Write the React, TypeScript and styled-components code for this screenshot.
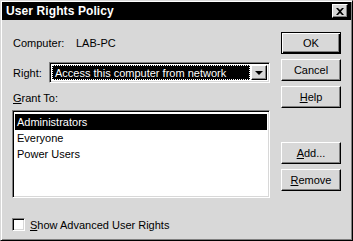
import styled, { createGlobalStyle } from "styled-components";

const GlobalStyle = createGlobalStyle`
  html, body {
    margin: 0;
    padding: 0;
    background: #ffffff;
  }
  body {
    font-family: "Liberation Sans", Arial, sans-serif;
    font-size: 11px;
    color: #000;
  }
`;

const face = "#d8d8d8";
const shadow = "#808080";

const Window = styled.div`
  width: 353px;
  height: 241px;
  box-sizing: border-box;
  background: ${face};
  border: 1px solid;
  border-color: ${face} #000 #000 ${face};
  box-shadow: inset 1px 1px 0 #fff, inset -1px -1px 0 ${shadow};
  padding: 1px;
  display: flex;
  flex-direction: column;
`;

const TitleBar = styled.div`
  height: 18px;
  background: #000;
  display: flex;
  align-items: center;
  justify-content: space-between;
  padding: 0 3px 0 4px;
`;

const Title = styled.span`
  color: #fff;
  font-weight: bold;
  font-size: 12px;
  letter-spacing: 0.1px;
`;

const raised = `
  border: 1px solid;
  border-color: #fff #000 #000 #fff;
  box-shadow: inset -1px -1px 0 ${shadow};
`;

const CloseButton = styled.button`
  width: 16px;
  height: 14px;
  padding: 0;
  box-sizing: border-box;
  background: ${face};
  ${raised}
  display: flex;
  align-items: center;
  justify-content: center;
`;

const Content = styled.div`
  display: flex;
  gap: 11px;
  padding: 12px 10px 0 10px;
`;

const LeftCol = styled.div`
  width: 258px;
  display: flex;
  flex-direction: column;
`;

const RightCol = styled.div`
  width: 60px;
  display: flex;
  flex-direction: column;
  gap: 5px;
`;

const InfoRow = styled.div`
  height: 21px;
  display: flex;
  align-items: center;
  padding-left: 1px;
`;

const Label = styled.span<{ $w?: number }>`
  display: inline-block;
  width: ${(p) => (p.$w ? `${p.$w}px` : "auto")};
  white-space: nowrap;
`;

const ComboRow = styled.div`
  margin-top: 9px;
  height: 21px;
  display: flex;
  align-items: center;
  padding-left: 1px;
`;

const sunken = `
  border: 1px solid;
  border-color: ${shadow} #fff #fff ${shadow};
  box-shadow: inset 1px 1px 0 #000, inset -1px -1px 0 ${face};
`;

const Combo = styled.div`
  width: 221px;
  height: 21px;
  box-sizing: border-box;
  background: #fff;
  ${sunken}
  padding: 2px;
  display: flex;
  gap: 1px;
`;

const ComboValue = styled.div`
  flex: 1;
  background: #000;
  color: #fff;
  outline: 1px dotted #fff;
  outline-offset: -1px;
  display: flex;
  align-items: center;
  padding-left: 3px;
  white-space: nowrap;
`;

const ArrowButton = styled.div`
  width: 16px;
  box-sizing: border-box;
  background: ${face};
  ${raised}
  display: flex;
  align-items: center;
  justify-content: center;
`;

const Arrow = styled.div`
  width: 0;
  height: 0;
  border-left: 4px solid transparent;
  border-right: 4px solid transparent;
  border-top: 4px solid #000;
`;

const GrantLabel = styled.div`
  margin-top: 8px;
  height: 14px;
  line-height: 14px;
  padding-left: 1px;
`;

const ListBox = styled.div`
  margin-top: 5px;
  height: 88px;
  box-sizing: border-box;
  background: #fff;
  ${sunken}
  padding: 3px 2px 2px;
`;

const ListItem = styled.div<{ $selected?: boolean }>`
  height: 16px;
  line-height: 16px;
  padding-left: 2px;
  background: ${(p) => (p.$selected ? "#000" : "transparent")};
  color: ${(p) => (p.$selected ? "#fff" : "#000")};
`;

const Button = styled.button<{ $default?: boolean; $spaced?: boolean }>`
  width: 60px;
  height: 22px;
  box-sizing: border-box;
  padding: 0;
  margin-top: ${(p) => (p.$spaced ? "29px" : "0")};
  background: ${face};
  font-family: inherit;
  font-size: 11px;
  color: #000;
  border: 1px solid;
  border-color: ${(p) => (p.$default ? "#000" : "#fff #000 #000 #fff")};
  box-shadow: ${(p) =>
    p.$default
      ? `inset 1px 1px 0 #fff, inset -1px -1px 0 #000, inset -2px -2px 0 ${shadow}`
      : `inset -1px -1px 0 ${shadow}`};
`;

const Footer = styled.div`
  display: flex;
  align-items: center;
  gap: 5px;
  padding: 0 10px;
  margin-top: 20px;
`;

const CheckBox = styled.div`
  width: 13px;
  height: 13px;
  box-sizing: border-box;
  background: #fff;
  ${sunken}
`;

export default function App() {
  return (
    <>
      <GlobalStyle />
      <Window>
        <TitleBar>
          <Title>User Rights Policy</Title>
          <CloseButton aria-label="Close">
            <svg width="8" height="7" viewBox="0 0 8 7">
              <path d="M0 0h2l2 2 2-2h2L5 3.5 8 7H6L4 5 2 7H0l3-3.5z" fill="#000" />
            </svg>
          </CloseButton>
        </TitleBar>
        <Content>
          <LeftCol>
            <InfoRow>
              <Label $w={63}>Computer:</Label>
              <Label>LAB-PC</Label>
            </InfoRow>
            <ComboRow>
              <Label $w={36}>
                Ri<u>g</u>ht:
              </Label>
              <Combo>
                <ComboValue>Access this computer from network</ComboValue>
                <ArrowButton>
                  <Arrow />
                </ArrowButton>
              </Combo>
            </ComboRow>
            <GrantLabel>
              <u>G</u>rant To:
            </GrantLabel>
            <ListBox>
              <ListItem $selected>Administrators</ListItem>
              <ListItem>Everyone</ListItem>
              <ListItem>Power Users</ListItem>
            </ListBox>
          </LeftCol>
          <RightCol>
            <Button $default>OK</Button>
            <Button>Cancel</Button>
            <Button>
              <u>H</u>elp
            </Button>
            <Button $spaced>
              <u>A</u>dd...
            </Button>
            <Button>
              <u>R</u>emove
            </Button>
          </RightCol>
        </Content>
        <Footer>
          <CheckBox />
          <span>
            <u>S</u>how Advanced User Rights
          </span>
        </Footer>
      </Window>
    </>
  );
}
